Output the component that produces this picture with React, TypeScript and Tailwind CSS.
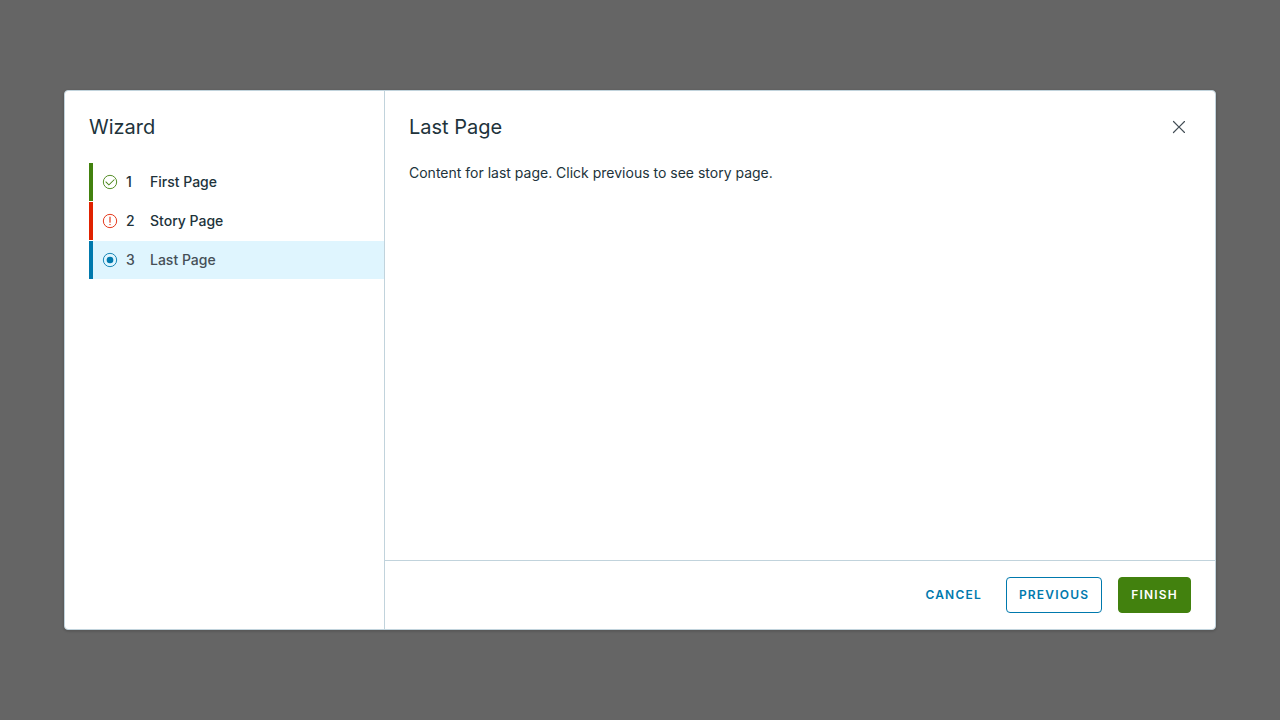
type Status = "success" | "error" | "current";

const steps: { label: string; status: Status }[] = [
  { label: "First Page", status: "success" },
  { label: "Story Page", status: "error" },
  { label: "Last Page", status: "current" },
];

const rowStyles: Record<Status, string> = {
  success: "border-[#42810e] text-[#21333b]",
  error: "border-[#e02200] text-[#21333b]",
  current: "border-[#0079ad] bg-[#dff5fe] text-[#454f57]",
};

const iconStyles: Record<Status, string> = {
  success: "size-4 text-[#42810e]",
  error: "size-4 text-[#e02200]",
  current: "size-4 text-[#0079ad]",
};

function StatusIcon({ status }: { status: Status }) {
  return (
    <svg viewBox="0 0 36 36" className={iconStyles[status]} fill="currentColor" aria-hidden="true">
      <circle cx="18" cy="18" r="15" fill="none" stroke="currentColor" strokeWidth="2" />
      {status === "success" && (
        <path d="M28,12.1a1,1,0,0,0-1.41,0L15.49,23.15l-6-6A1,1,0,0,0,8,18.53L15.49,26,28,13.52A1,1,0,0,0,28,12.1Z" />
      )}
      {status === "error" && (
        <>
          <path d="M18,22a1.2,1.2,0,0,0,1.2-1.2V9.2a1.2,1.2,0,1,0-2.4,0V20.8A1.2,1.2,0,0,0,18,22Z" />
          <circle cx="18" cy="26" r="1.5" />
        </>
      )}
      {status === "current" && <circle cx="18" cy="18" r="7.5" />}
    </svg>
  );
}

export default function App() {
  return (
    <div className="flex min-h-screen items-center justify-center bg-[#656565] font-['Inter','Liberation_Sans',sans-serif] text-sm text-[#21333b]">
      <div
        role="dialog"
        aria-labelledby="page-title"
        className="flex min-h-[75vh] w-[90vw] overflow-hidden rounded border border-[#c1d3dc] bg-white shadow-[0_1px_2px_1px_rgba(0,0,0,0.12)]"
      >
        <aside className="w-80 shrink-0 border-r border-[#c1d3dc] pt-6 pl-6">
          <h1 className="text-xl leading-6">Wizard</h1>
          <ol className="mt-6 flex flex-col gap-px">
            {steps.map((step, i) => (
              <li key={step.label}>
                <button
                  type="button"
                  aria-current={step.status === "current" ? "step" : undefined}
                  className={`flex h-[38px] w-full items-center border-l-4 pl-[9px] text-left font-medium ${rowStyles[step.status]}`}
                >
                  <StatusIcon status={step.status} />
                  <span className="ml-2 w-6">{i + 1}</span>
                  <span>{step.label}</span>
                </button>
              </li>
            ))}
          </ol>
        </aside>
        <main className="flex min-w-0 grow flex-col">
          <header className="flex items-center justify-between px-6 pt-6">
            <h2 id="page-title" className="text-xl leading-6">Last Page</h2>
            <button type="button" aria-label="Close" className="flex size-6 items-center justify-center text-[#454f57]">
              <svg viewBox="0 0 36 36" className="size-[22px]" fill="currentColor" aria-hidden="true">
                <path d="M19.41,18l8.29-8.29a1,1,0,0,0-1.41-1.41L18,16.59,9.71,8.29A1,1,0,0,0,8.29,9.71L16.59,18,8.29,26.29a1,1,0,1,0,1.41,1.41L18,19.41l8.29,8.29a1,1,0,0,0,1.41-1.41Z" />
              </svg>
            </button>
          </header>
          <p className="grow px-6 pt-6 leading-5">Content for last page. Click previous to see story page.</p>
          <footer className="flex justify-end gap-4 border-t border-[#c1d3dc] px-6 py-4 text-xs font-semibold tracking-widest">
            <button type="button" className="h-9 px-2 text-[#0079ad]">CANCEL</button>
            <button type="button" className="h-9 rounded border border-[#0079ad] px-3 text-[#0079ad]">PREVIOUS</button>
            <button type="button" className="h-9 rounded border border-[#42810e] bg-[#42810e] px-3 text-white">FINISH</button>
          </footer>
        </main>
      </div>
    </div>
  );
}
